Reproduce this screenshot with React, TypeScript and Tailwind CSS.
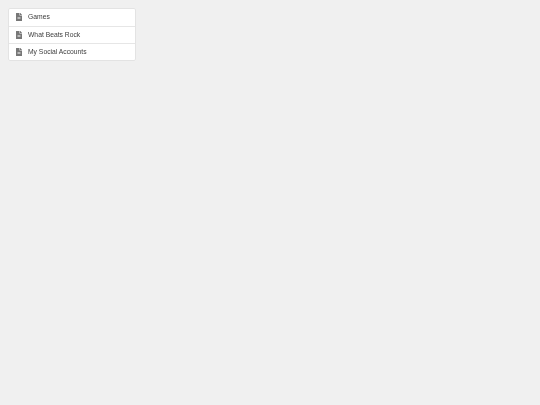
const items = ["Games", "What Beats Rock", "My Social Accounts"];

function FileIcon() {
  return (
    <svg viewBox="0 0 384 512" aria-hidden className="mb-px h-[8px] w-[6px] shrink-0 text-[#777]">
      <path
        fill="currentColor"
        d="M224 136V0H24C10.700 0 0 10.700 0 24v464c0 13.300 10.700 24 24 24h336c13.300 0 24-10.700 24-24V160H248c-13.200 0-24-10.800-24-24zm64 236c0 6.600-5.400 12-12 12H108c-6.600 0-12-5.400-12-12v-8c0-6.600 5.400-12 12-12h168c6.600 0 12 5.400 12 12v8zm0-64c0 6.600-5.400 12-12 12H108c-6.600 0-12-5.400-12-12v-8c0-6.600 5.400-12 12-12h168c6.600 0 12 5.400 12 12v8zm96-186v6H256V0h6c6.400 0 12.500 2.500 17 7l98 98c4.500 4.500 7 10.600 7 16z"
      />
    </svg>
  );
}

export default function App() {
  return (
    <div className="min-h-[405px] bg-[#f0f0f0] p-2 font-['Liberation_Sans',Arial,sans-serif] antialiased">
      <ul className="w-[128px] rounded-[2px] border border-[#e3e3e3] bg-white blur-[0.25px]">
        {items.map((item, i) => (
          <li
            key={item}
            className={`flex h-[17px] items-center gap-[6px] pl-[7px] text-[6.75px] leading-none text-[#3d3d3d] ${
              i > 0 ? "border-t border-[#e6e6e6]" : ""
            }`}
          >
            <FileIcon />
            {item}
          </li>
        ))}
      </ul>
    </div>
  );
}
